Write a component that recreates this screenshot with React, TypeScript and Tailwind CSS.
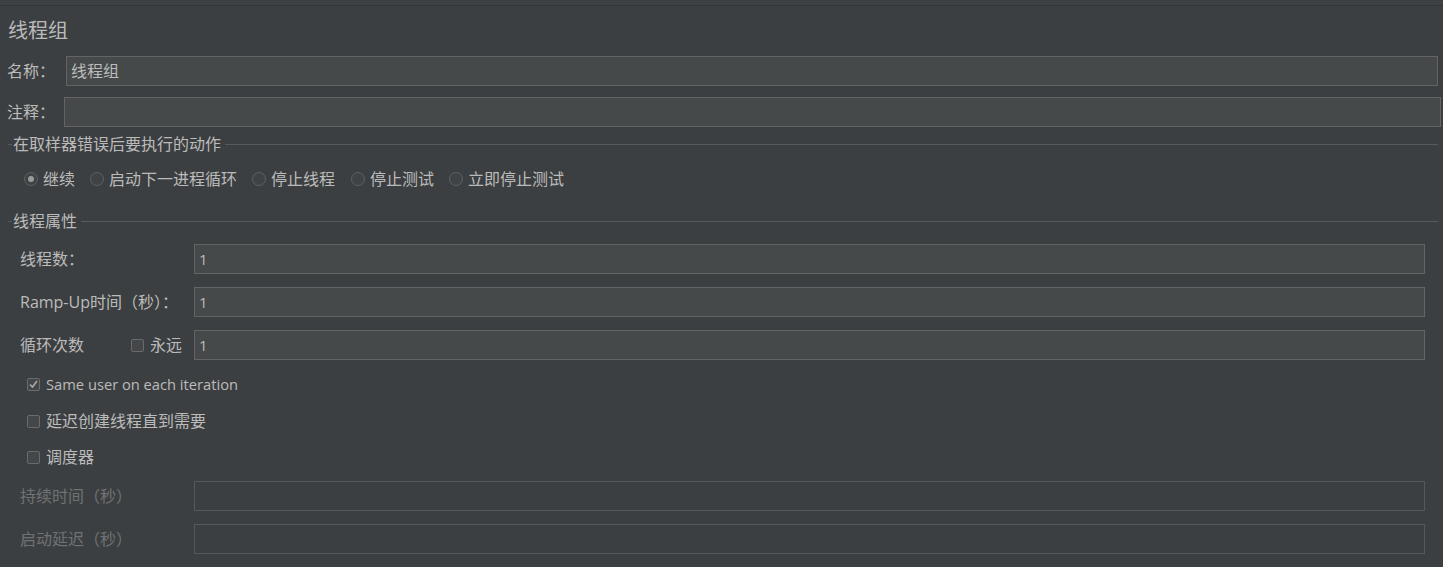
import type { ReactNode } from "react";

const font = { fontFamily: '"Open Sans", "Noto Sans CJK SC", sans-serif' };

function Field({ disabled, value, className = "" }: { disabled?: boolean; value?: string; className?: string }) {
  return (
    <div
      className={
        "h-[30px] flex items-center pl-[4px] text-[15px] " +
        (disabled ? "border border-[#555758] bg-[#3c3f41] " : "border border-[#646464] bg-[#45494a] text-[#bbbbbb] ") +
        className
      }
    >
      {value}
    </div>
  );
}

function Legend({ children, mt }: { children: ReactNode; mt: string }) {
  return (
    <div className={"flex items-center h-[20px] pl-[8px] pr-[5px] " + mt}>
      <div className="w-[4px] h-px bg-[#555a5c]" />
      <span className="px-[1px] text-[16px] text-[#bbbbbb]">{children}</span>
      <div className="flex-1 h-px bg-[#555a5c] ml-[3px]" />
    </div>
  );
}

function Radio({ label, checked, mr }: { label: string; checked?: boolean; mr: string }) {
  return (
    <div className={"flex items-center gap-[5px] " + mr}>
      <div className="w-[14px] h-[14px] rounded-full border border-[#5e6162] bg-[#3f4345] flex items-center justify-center">
        {checked && <div className="w-[6px] h-[6px] rounded-full bg-[#9b9b9b]" />}
      </div>
      <span className="text-[16px] text-[#bbbbbb]">{label}</span>
    </div>
  );
}

function Check({ label, checked, mt, size = "text-[16px]" }: { label: string; checked?: boolean; mt: string; size?: string }) {
  return (
    <div className={"flex items-center h-[20px] pl-[27px] gap-[6px] " + mt}>
      <div className="w-[13px] h-[13px] rounded-[2px] border border-[#6b6b6b] bg-[#43474a] flex items-center justify-center">
        {checked && (
          <svg width="11" height="11" viewBox="0 0 11 11">
            <path d="M2 5.5 L4.5 8 L9 2" fill="none" stroke="#a9a9a9" strokeWidth="1.6" />
          </svg>
        )}
      </div>
      <span className={"text-[#bbbbbb] " + size}>{label}</span>
    </div>
  );
}

function Row({ label, mt, disabled, value, extra }: { label: string; mt: string; disabled?: boolean; value?: string; extra?: ReactNode }) {
  return (
    <div className={"flex items-center h-[30px] pl-[20px] pr-[18px] " + mt}>
      <div className={"w-[111px] whitespace-nowrap text-[16px] " + (disabled ? "text-[#6f7274]" : "text-[#bbbbbb]")}>{label}</div>
      <div className="w-[63px] flex items-center">{extra}</div>
      <Field disabled={disabled} value={value} className="flex-1" />
    </div>
  );
}

export default function App() {
  return (
    <div className="w-[1443px] h-[567px] bg-[#3c3f41] overflow-hidden flex flex-col" style={font}>
      <div className="h-[6px] bg-[#3e4143] border-b border-[#333537]" />
      <div className="h-[50px] flex items-center pl-[8px] text-[20px] text-[#bbbbbb]">线程组</div>

      <div className="flex items-center h-[30px] pl-[7px] pr-[5px]">
        <div className="w-[59px] text-[16px] text-[#bbbbbb]">名称：</div>
        <Field value="线程组" className="flex-1 text-[16px]" />
      </div>
      <div className="flex items-center h-[30px] pl-[7px] pr-[2px] mt-[11px]">
        <div className="w-[57px] text-[16px] text-[#bbbbbb]">注释：</div>
        <Field className="flex-1" />
      </div>

      <Legend mt="mt-[7px]">在取样器错误后要执行的动作</Legend>
      <div className="flex items-center h-[20px] pl-[24px] mt-[15px]">
        <Radio label="继续" checked mr="mr-[15px]" />
        <Radio label="启动下一进程循环" mr="mr-[15px]" />
        <Radio label="停止线程" mr="mr-[16px]" />
        <Radio label="停止测试" mr="mr-[15px]" />
        <Radio label="立即停止测试" mr="mr-[15px]" />
      </div>

      <Legend mt="mt-[22px]">线程属性</Legend>
      <Row label="线程数：" value="1" mt="mt-[13px]" />
      <Row label="Ramp-Up时间（秒）：" value="1" mt="mt-[13px]" />
      <Row
        label="循环次数"
        value="1"
        mt="mt-[13px]"
        extra={
          <div className="flex items-center gap-[6px]">
            <div className="w-[13px] h-[13px] rounded-[2px] border border-[#6b6b6b] bg-[#43474a]" />
            <span className="text-[16px] text-[#bbbbbb]">永远</span>
          </div>
        }
      />

      <Check label="Same user on each iteration" checked mt="mt-[14px]" size="text-[14.7px]" />
      <Check label="延迟创建线程直到需要" mt="mt-[17px]" />
      <Check label="调度器" mt="mt-[16px]" />

      <Row label="持续时间（秒）" disabled mt="mt-[14px]" />
      <Row label="启动延迟（秒）" disabled mt="mt-[13px]" />
    </div>
  );
}
